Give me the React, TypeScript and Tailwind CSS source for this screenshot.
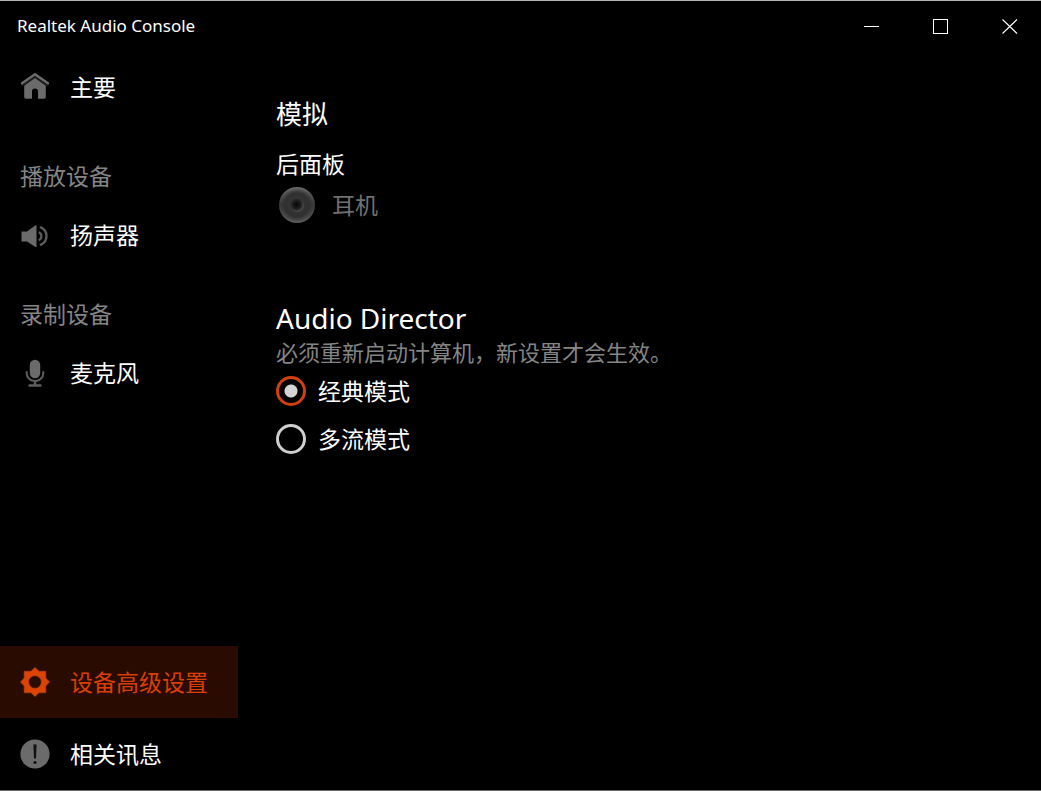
import { useState } from "react";
import type { ReactNode } from "react";

function HomeIcon() {
  return (
    <svg viewBox="0 0 30 30" className="size-[30px] shrink-0" aria-hidden="true">
      <path d="M4.200 13.500 15 5.600 25.800 13.500V25a1.800 1.800 0 0 1-1.800 1.800H18V19.500a3 3 0 0 0-6 0v7.300H6A1.800 1.800 0 0 1 4.200 25Z" fill="#6b6b6b" />
      <path d="M2 13.200 15 4.200l13 9" fill="none" stroke="#1c1c1c" strokeWidth="3" />
      <path d="M2 11.300 15 2.300 28 11.300" fill="none" stroke="#6b6b6b" strokeWidth="2.400" strokeLinecap="round" />
    </svg>
  );
}

function SpeakerIcon() {
  return (
    <svg viewBox="0 0 30 30" className="size-[30px] shrink-0" aria-hidden="true">
      <path d="M1.500 11.500h5.500L15.500 5.300q1-.5 1 .7v20.500q0 1.200-1 .6L7 21.500H1.500Z" fill="#6b6b6b" />
      <path d="M18.800 12.300a4.300 4.300 0 0 1 0 7.900" fill="none" stroke="#5c5c5c" strokeWidth="2.200" />
      <path d="M20.800 7.400a9.500 9.500 0 0 1 0 17.400" fill="none" stroke="#5c5c5c" strokeWidth="2.400" strokeLinecap="round" />
    </svg>
  );
}

function MicIcon() {
  return (
    <svg viewBox="0 0 30 30" className="size-[30px] shrink-0" aria-hidden="true">
      <rect x="9.800" y="1.800" width="10.400" height="18.400" rx="5.200" fill="#6b6b6b" />
      <path d="M6.700 14v1.200a8.300 7.800 0 0 0 16.600 0v-1.200" fill="none" stroke="#5e5e5e" strokeWidth="2" strokeLinecap="round" />
      <path d="M15 23V27M9.500 27.500h11" fill="none" stroke="#5e5e5e" strokeWidth="2.400" strokeLinecap="round" />
    </svg>
  );
}

function GearIcon() {
  return (
    <svg viewBox="0 0 30 30" className="size-[30px] shrink-0" aria-hidden="true">
      <path
        fillRule="evenodd"
        d="M15 .5l4 3.700h6.800V11L29.500 15l-3.700 4v6.800H19L15 29.500l-4-3.700H4.200V19L.5 15l3.700-4V4.200H11ZM15 8.700a6.300 6.300 0 1 0 0 12.600 6.300 6.300 0 0 0 0-12.600Z"
        fill="#dc4405"
        stroke="#a8441c"
        strokeWidth=".6"
        strokeLinejoin="round"
      />
    </svg>
  );
}

function InfoIcon() {
  return (
    <svg viewBox="0 0 30 30" className="size-[30px] shrink-0" aria-hidden="true">
      <circle cx="15" cy="15" r="14.600" fill="#6b6b6b" />
      <path d="M13.400 5.500h3.200l-.6 14h-2Z" fill="#111" />
      <circle cx="15" cy="23.500" r="1.600" fill="#111" />
    </svg>
  );
}

function JackIcon() {
  return (
    <svg viewBox="0 0 38 38" className="size-[38px] shrink-0" aria-hidden="true">
      <defs>
        <linearGradient id="jack-rim" x1="0" y1="0" x2="0" y2="1">
          <stop offset="0" stopColor="#6a6a6a" />
          <stop offset=".5" stopColor="#383838" />
          <stop offset="1" stopColor="#5c5c5c" />
        </linearGradient>
        <radialGradient id="jack-face">
          <stop offset="0" stopColor="#3a3a3a" />
          <stop offset=".7" stopColor="#303030" />
          <stop offset="1" stopColor="#303030" stopOpacity="0" />
        </radialGradient>
        <radialGradient id="jack-hole">
          <stop offset="0" stopColor="#0a0a0a" />
          <stop offset=".5" stopColor="#161616" />
          <stop offset="1" stopColor="#303030" />
        </radialGradient>
      </defs>
      <circle cx="19" cy="19" r="18" fill="url(#jack-rim)" />
      <circle cx="19" cy="19" r="17" fill="url(#jack-face)" />
      <circle cx="19.500" cy="19.500" r="6.500" fill="#484848" />
      <circle cx="18.500" cy="18.500" r="6.200" fill="url(#jack-hole)" />
    </svg>
  );
}

function NavItem({ icon, label, active = false }: { icon: ReactNode; label: string; active?: boolean }) {
  return (
    <a
      href="#"
      aria-current={active ? "page" : undefined}
      className={
        active
          ? "flex h-[72px] items-center gap-5 bg-[#2a0b01] pl-5 text-[23px] leading-8 text-[#d83f04]"
          : "flex h-[72px] items-center gap-5 pl-5 text-[23px] leading-8 text-white"
      }
    >
      {icon}
      <span>{label}</span>
    </a>
  );
}

function NavHeading({ children }: { children: ReactNode }) {
  return <h2 className="mt-5 pl-5 text-[23px] leading-[46px] text-[#858585]">{children}</h2>;
}

const modes = [
  { id: "classic", label: "经典模式" },
  { id: "multi", label: "多流模式" },
];

export default function App() {
  const [mode, setMode] = useState("classic");

  return (
    <div className="flex min-h-screen flex-col border-t border-b border-t-[#b4b4b4] border-b-[#6a6a6a] bg-black font-['Noto_Sans','Noto_Sans_CJK_SC',sans-serif] font-normal text-white">
      <header className="flex h-[50px] items-center justify-between pl-[17px]">
        <h1 className="text-[17px] leading-6">Realtek Audio Console</h1>
        <div className="-mr-px flex h-full gap-[5px]">
          <button type="button" aria-label="最小化" className="flex w-16 items-center justify-center">
            <svg viewBox="0 0 16 16" className="size-4" stroke="#fff" shapeRendering="crispEdges" aria-hidden="true">
              <path d="M0 8.500h15" />
            </svg>
          </button>
          <button type="button" aria-label="最大化" className="flex w-16 items-center justify-center">
            <svg viewBox="0 0 16 16" className="size-4" stroke="#fff" fill="none" shapeRendering="crispEdges" aria-hidden="true">
              <rect x=".5" y="1.500" width="14" height="14" />
            </svg>
          </button>
          <button type="button" aria-label="关闭" className="flex w-16 items-center justify-center">
            <svg viewBox="0 0 16 16" className="size-4" stroke="#fff" strokeWidth="1.100" aria-hidden="true">
              <path d="M.5 1.500l14.500 14M15 1.500.5 15.500" />
            </svg>
          </button>
        </div>
      </header>

      <div className="flex grow">
        <nav className="flex w-[238px] shrink-0 flex-col justify-between">
          <div>
            <div className="mb-[30px]">
              <NavItem icon={<HomeIcon />} label="主要" />
            </div>
            <NavHeading>播放设备</NavHeading>
            <NavItem icon={<SpeakerIcon />} label="扬声器" />
            <NavHeading>录制设备</NavHeading>
            <NavItem icon={<MicIcon />} label="麦克风" />
          </div>
          <div>
            <NavItem icon={<GearIcon />} label="设备高级设置" active />
            <NavItem icon={<InfoIcon />} label="相关讯息" />
          </div>
        </nav>

        <main className="grow pt-[43px] pl-[38px]">
          <section>
            <h2 className="text-[26px] leading-10">模拟</h2>
            <h3 className="mt-3 text-[23px] leading-9">后面板</h3>
            <div className="flex h-[46px] items-center gap-4 pl-[2px] text-[23px] text-[#707070]">
              <JackIcon />
              <span>耳机</span>
            </div>
          </section>

          <section className="mt-[70px]">
            <h2 className="text-[28px] leading-10">Audio Director</h2>
            <p className="mb-px text-[22px] leading-7 text-[#858585]">必须重新启动计算机，新设置才会生效。</p>
            <div role="radiogroup" aria-label="Audio Director">
              {modes.map((m) => (
                <div key={m.id} className="flex h-12 items-center">
                  <input
                    id={m.id}
                    type="radio"
                    name="mode"
                    checked={mode === m.id}
                    onChange={() => setMode(m.id)}
                    className="size-[30px] shrink-0 appearance-none rounded-full border-3 border-[#cfcfcf] checked:border-[#d2400f] checked:bg-[radial-gradient(circle,#d4d4d4_6px,transparent_7px)]"
                  />
                  <label htmlFor={m.id} className="pl-3 text-[23px] leading-8">
                    {m.label}
                  </label>
                </div>
              ))}
            </div>
          </section>
        </main>
      </div>
    </div>
  );
}
